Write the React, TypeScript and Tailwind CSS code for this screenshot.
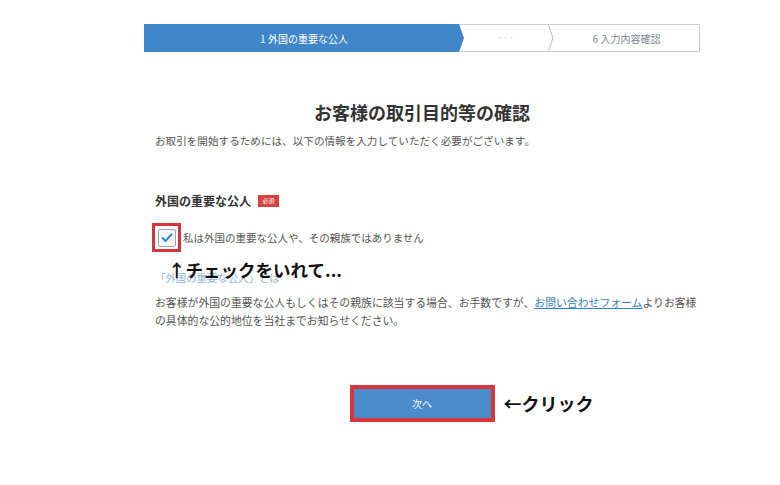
import React from "react";

export default function App() {
  return (
    <div
      className="w-[780px] h-[485px] bg-white overflow-hidden"
      style={{ fontFamily: '"Noto Sans CJK JP", "Noto Sans", sans-serif' }}
    >
      <div className="ml-[144px] w-[556px] pt-[24px]">
        {/* Step bar */}
        <div className="flex h-[28px] border border-[#c9ced6]">
          <div className="-my-px -ml-px h-[28px] w-[320px] bg-[#3f87c8] [clip-path:polygon(0_0,calc(100%-5px)_0,100%_50%,calc(100%-5px)_100%,0_100%)] flex items-center justify-center text-white text-[10px]">
            1 外国の重要な公人
          </div>
          <div className="w-[84px] flex items-center justify-center text-[#c4c9cf] text-[9px] tracking-[1px]">
            ···
          </div>
          <svg width="6" height="26" viewBox="0 0 6 26" className="shrink-0">
            <polyline points="0.5,0 5,13 0.5,26" fill="none" stroke="#b9bfc6" strokeWidth="1" />
          </svg>
          <div className="flex-1 flex items-center justify-center text-[#7d8791] text-[10px]">
            6 入力内容確認
          </div>
        </div>

        {/* Title */}
        <h1 className="mt-[48px] text-center text-[18px] leading-[24px] font-bold text-[#333]">
          お客様の取引目的等の確認
        </h1>

        <div className="pl-[11px]">
          <p className="mt-[9px] text-[10.6px] leading-[16px] text-[#555]">
            お取引を開始するためには、以下の情報を入力していただく必要がございます。
          </p>

          <div className="mt-[44px] flex items-center h-[16px]">
            <span className="text-[12px] leading-[16px] font-bold text-[#333]">外国の重要な公人</span>
            <span className="ml-[7px] w-[21px] h-[12px] bg-[#d9433f] text-white text-[6px] leading-[12px] text-center">
              必須
            </span>
          </div>

          {/* Checkbox row */}
          <div className="mt-[14px] -ml-[3px] flex items-center">
            <div className="w-[29px] h-[29px] border-[3px] border-[#d8333b] flex items-center justify-center">
              <div className="w-[18px] h-[18px] rounded-[2px] border border-[#9aa8b6] bg-[#f3f7fb] flex items-center justify-center">
                <svg width="12" height="10" viewBox="0 0 12 10">
                  <polyline points="1.5,5 4.5,8 10.5,1.5" fill="none" stroke="#2f8ad0" strokeWidth="2" strokeLinecap="round" strokeLinejoin="round" />
                </svg>
              </div>
            </div>
            <span className="ml-[2px] text-[10.5px] leading-[16px] text-[#555]">
              私は外国の重要な公人や、その親族ではありません
            </span>
          </div>

          {/* Link line with annotation over it */}
          <div className="relative mt-[11px] h-[16px]">
            <span className="text-[10.4px] leading-[16px] text-[#8fb5db]">「外国の重要な公人」とは</span>
            <div className="absolute left-[13px] -top-[5px] text-[17.5px] leading-[24px] font-bold text-[#111] whitespace-nowrap">
              ↑チェックをいれて...
            </div>
          </div>

          <p className="mt-[14px] text-[10.85px] leading-[18px] text-[#555] whitespace-nowrap">
            お客様が外国の重要な公人もしくはその親族に該当する場合、お手数ですが、
            <span className="text-[#3a7fc4] underline">お問い合わせフォーム</span>
            よりお客様
            <br />
            の具体的な公的地位を当社までお知らせください。
          </p>
        </div>

        {/* Button */}
        <div className="mt-[56px] flex justify-center">
          <div className="relative">
            <button className="w-[145px] h-[37px] border-[4px] border-[#d8353d] bg-[#4a8bcb] text-white text-[10px] flex items-center justify-center">
              次へ
            </button>
            <div className="absolute left-[154px] top-[6px] text-[18px] leading-[24px] font-bold text-[#111] whitespace-nowrap">
              ←クリック
            </div>
          </div>
        </div>
      </div>
    </div>
  );
}
